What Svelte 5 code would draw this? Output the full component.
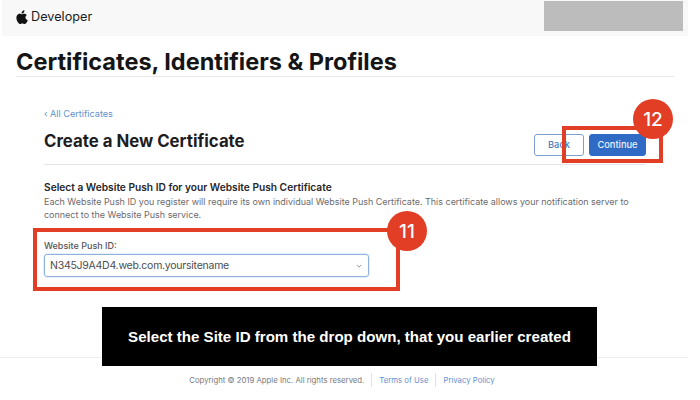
<script>
  const pushId = 'N345J9A4D4.web.com.yoursitename';
</script>

<div class="page">
  <header>
    <div class="brand">
      <svg viewBox="2 1 11.500 14" width="12" height="14" aria-hidden="true">
        <path d="M11.2 8.5c0-1.600 1.300-2.400 1.400-2.500-.8-1.100-2-1.300-2.400-1.300-1-.1-2 .6-2.500.6s-1.300-.6-2.200-.6C4.400 4.700 3.300 5.400 2.700 6.400 1.500 8.500 2.400 11.600 3.600 13.300c.6.800 1.300 1.800 2.200 1.700.9 0 1.200-.6 2.300-.6s1.400.6 2.300.5c1 0 1.600-.8 2.100-1.700.7-1 1-1.900 1-2-.1 0-2.300-.8-2.300-2.700zM9.500 3.500c.5-.6.800-1.400.7-2.300-.7 0-1.600.5-2.100 1.100-.5.500-.9 1.400-.8 2.200.8.100 1.700-.4 2.200-1z" fill="#111" />
      </svg>
      <span>Developer</span>
    </div>
    <div class="redacted"></div>
  </header>

  <h1>Certificates, Identifiers &amp; Profiles</h1>

  <main>
    <a class="back-link" href="#top">‹ All Certificates</a>
    <div class="title-row">
      <h2>Create a New Certificate</h2>
      <div class="actions">
        <button class="btn outline">Back</button>
        <button class="btn primary">Continue</button>
      </div>
      <div class="callout callout-continue"></div>
      <div class="badge badge-continue">12</div>
    </div>

    <h3>Select a Website Push ID for your Website Push Certificate</h3>
    <p>Each Website Push ID you register will require its own individual Website Push Certificate. This certificate allows your notification server to connect to the Website Push service.</p>

    <div class="field">
      <label for="push">Website Push ID:</label>
      <div class="select" id="push">
        <span>{pushId}</span>
        <svg viewBox="0 0 8 5" width="6" height="4" aria-hidden="true"><path d="M1 1l3 3 3-3" fill="none" stroke="#777" stroke-width="1" /></svg>
      </div>
      <div class="callout callout-field"></div>
      <div class="badge badge-field">11</div>
    </div>
  </main>

  <footer>
    <span>Copyright © 2019 Apple Inc. All rights reserved.</span>
    <a href="#top">Terms of Use</a>
    <a href="#top">Privacy Policy</a>
  </footer>

  <div class="caption">Select the Site ID from the drop down, that you earlier created</div>
</div>

<style>
  :global(body) {
    margin: 0;
    background: #fff;
  }

  .page {
    position: relative;
    width: 700px;
    height: 400px;
    overflow: hidden;
    font-family: Inter, "Liberation Sans", sans-serif;
    color: #1d1d1f;
  }

  header {
    display: flex;
    justify-content: space-between;
    align-items: flex-start;
    box-sizing: border-box;
    width: 686px;
    height: 36px;
    margin-left: 2px;
    padding: 1px 5px 0 14px;
    background: #f8f8f8;
  }

  .brand {
    display: flex;
    align-items: center;
    gap: 3px;
    height: 31px;
    font-size: 12.7px;
    color: #1c1c1e;
  }

  .redacted {
    width: 139px;
    height: 30px;
    background: #bcbcbc;
  }

  h1 {
    box-sizing: border-box;
    width: 658px;
    height: 41px;
    margin: 0 0 0 16px;
    padding-top: 12px;
    border-bottom: 1px solid #e8e8e8;
    font-size: 23.5px;
    line-height: 28px;
    font-weight: 700;
    color: #151516;
  }

  main {
    width: 601px;
    margin: 30px 0 0 44px;
  }

  .back-link {
    display: block;
    height: 14px;
    font-size: 9.1px;
    line-height: 14px;
    color: #5f8fd0;
    text-decoration: none;
  }

  .title-row {
    position: relative;
    display: flex;
    justify-content: space-between;
    align-items: center;
    height: 37px;
    margin-top: 6px;
    margin-bottom: 16px;
    border-bottom: 1px solid #e4e4e4;
  }

  h2 {
    margin: 0 0 9px;
    font-size: 16.8px;
    font-weight: 700;
    color: #1d1d1f;
  }

  .actions {
    display: flex;
    gap: 5px;
    margin: 0 -1px 2px 0;
  }

  .btn {
    width: 50px;
    height: 22px;
    padding: 0;
    border-radius: 3px;
    font: 500 9.3px Inter, "Liberation Sans", sans-serif;
  }

  .outline {
    border: 1px solid #7d9fce;
    background: #fff;
    color: #4b7cc0;
  }

  .primary {
    width: 57px;
    border: 1px solid #2f6bc4;
    background: #2f6bc4;
    color: #e9f0fa;
  }

  .callout {
    position: absolute;
    box-sizing: border-box;
    border: 4px solid #e23e26;
  }

  .callout-continue {
    left: 518px;
    top: -1px;
    width: 101px;
    height: 37px;
  }

  .badge {
    position: absolute;
    display: flex;
    align-items: center;
    justify-content: center;
    width: 40px;
    height: 40px;
    border-radius: 50%;
    background: #e23e26;
    color: #fff;
    font-size: 19px;
    font-weight: 500;
  }

  .badge-continue {
    left: 589px;
    top: -28px;
  }

  h3 {
    margin: 0;
    font-size: 10.2px;
    line-height: 12px;
    font-weight: 600;
    color: #26262a;
  }

  p {
    width: 600px;
    margin: 2px 0 0;
    font-size: 8.96px;
    line-height: 13px;
    color: #6a6a6e;
  }

  .field {
    position: relative;
    margin-top: 19px;
  }

  label {
    display: block;
    font-size: 9px;
    line-height: 12px;
    font-weight: 500;
    color: #55555a;
  }

  .select {
    display: flex;
    justify-content: space-between;
    align-items: center;
    box-sizing: border-box;
    width: 325px;
    height: 23px;
    margin-top: 2px;
    padding: 0 6px 0 5px;
    border: 1px solid #8fb1de;
    border-radius: 3px;
    box-shadow: 0 0 2px #a9c6ea;
    font-size: 10.5px;
    letter-spacing: -0.25px;
    color: #4c4c50;
  }

  .callout-field {
    left: -11px;
    top: -12px;
    width: 367px;
    height: 63px;
  }

  .badge-field {
    left: 343px;
    top: -29px;
  }

  footer {
    position: absolute;
    left: 0;
    right: 12px;
    top: 357px;
    display: flex;
    justify-content: center;
    align-items: center;
    gap: 7px;
    height: 42px;
    padding: 2px 4px 0 0;
    box-sizing: border-box;
    border-top: 1px solid #eee;
    font-size: 7.75px;
    color: #77777b;
  }

  footer a {
    padding-left: 7px;
    border-left: 1px solid #e2e2e2;
    line-height: 14px;
    color: #5f8fd0;
    text-decoration: none;
  }

  .caption {
    position: absolute;
    left: 102px;
    top: 307px;
    display: flex;
    align-items: center;
    justify-content: center;
    width: 495px;
    height: 59px;
    background: #000;
    color: #fff;
    font: 700 15.1px "Liberation Sans", sans-serif;
  }
</style>
